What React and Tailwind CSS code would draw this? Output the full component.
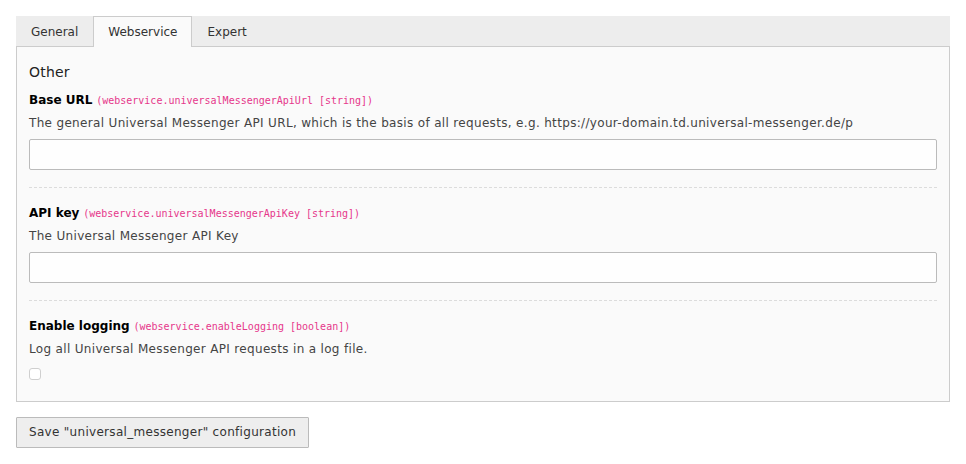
import React from "react";

const font = { fontFamily: '"DejaVu Sans", Verdana, sans-serif' };

function Field({ label, code, desc, children, first, last }) {
  return (
    <div
      className={
        (first ? "pt-[9px] " : "pt-[16px] ") +
        (last ? "pb-[21px] " : "pb-[17px] border-b border-dashed border-[#dcdcdc]")
      }
    >
      <div className="text-[12px] leading-[18px] text-black">
        <span className="font-bold">{label}</span>{" "}
        <span className="font-['DejaVu_Sans_Mono',monospace] text-[10px] text-[#e6378b]">
          ({code})
        </span>
      </div>
      <div className="mt-[4px] text-[12px] leading-[18px] tracking-[0.33px] text-[#444]">{desc}</div>
      {children}
    </div>
  );
}

export default function App() {
  const tabs = ["General", "Webservice", "Expert"];
  return (
    <div className="min-h-[464px] bg-white pt-4" style={font}>
      <div className="ml-4 w-[934px]">
        <div className="flex bg-[#ededed] text-[12px] text-[#333]">
          {tabs.map((t) => (
            <div
              key={t}
              className={
                "relative z-10 -mb-px px-[14px] py-[6px] leading-[18px] border border-b-0 " +
                (t === "Webservice"
                  ? "bg-[#fafafa] border-[#cccccc]"
                  : "border-transparent")
              }
            >
              {t}
            </div>
          ))}
        </div>
        <div className="border border-[#cccccc] bg-[#fafafa] px-3 pt-[15px]">
          <div className="text-[14px] leading-[20px] tracking-[0.2px] text-[#222]">Other</div>
          <Field
            first
            label="Base URL"
            code="webservice.universalMessengerApiUrl [string]"
            desc="The general Universal Messenger API URL, which is the basis of all requests, e.g. https://your-domain.td.universal-messenger.de/p"
          >
            <input
              type="text"
              className="mt-[7px] block h-[31px] w-full rounded-[2px] border border-[#bbbbbb] bg-[#fefefe] outline-none"
            />
          </Field>
          <Field
            label="API key"
            code="webservice.universalMessengerApiKey [string]"
            desc="The Universal Messenger API Key"
          >
            <input
              type="text"
              className="mt-[7px] block h-[31px] w-full rounded-[2px] border border-[#bbbbbb] bg-[#fefefe] outline-none"
            />
          </Field>
          <Field
            last
            label="Enable logging"
            code="webservice.enableLogging [boolean]"
            desc="Log all Universal Messenger API requests in a log file."
          >
            <div className="mt-[10px] h-3 w-3 rounded-[3px] border border-[#cfcfcf] bg-white" />
          </Field>
        </div>
        <button className="mt-[15px] block h-[31px] rounded-[1px] border border-[#bbbbbb] bg-[#eeeeee] px-3 text-[12px] leading-[17px] tracking-[0.3px] text-[#333]">
          Save "universal_messenger" configuration
        </button>
      </div>
    </div>
  );
}
